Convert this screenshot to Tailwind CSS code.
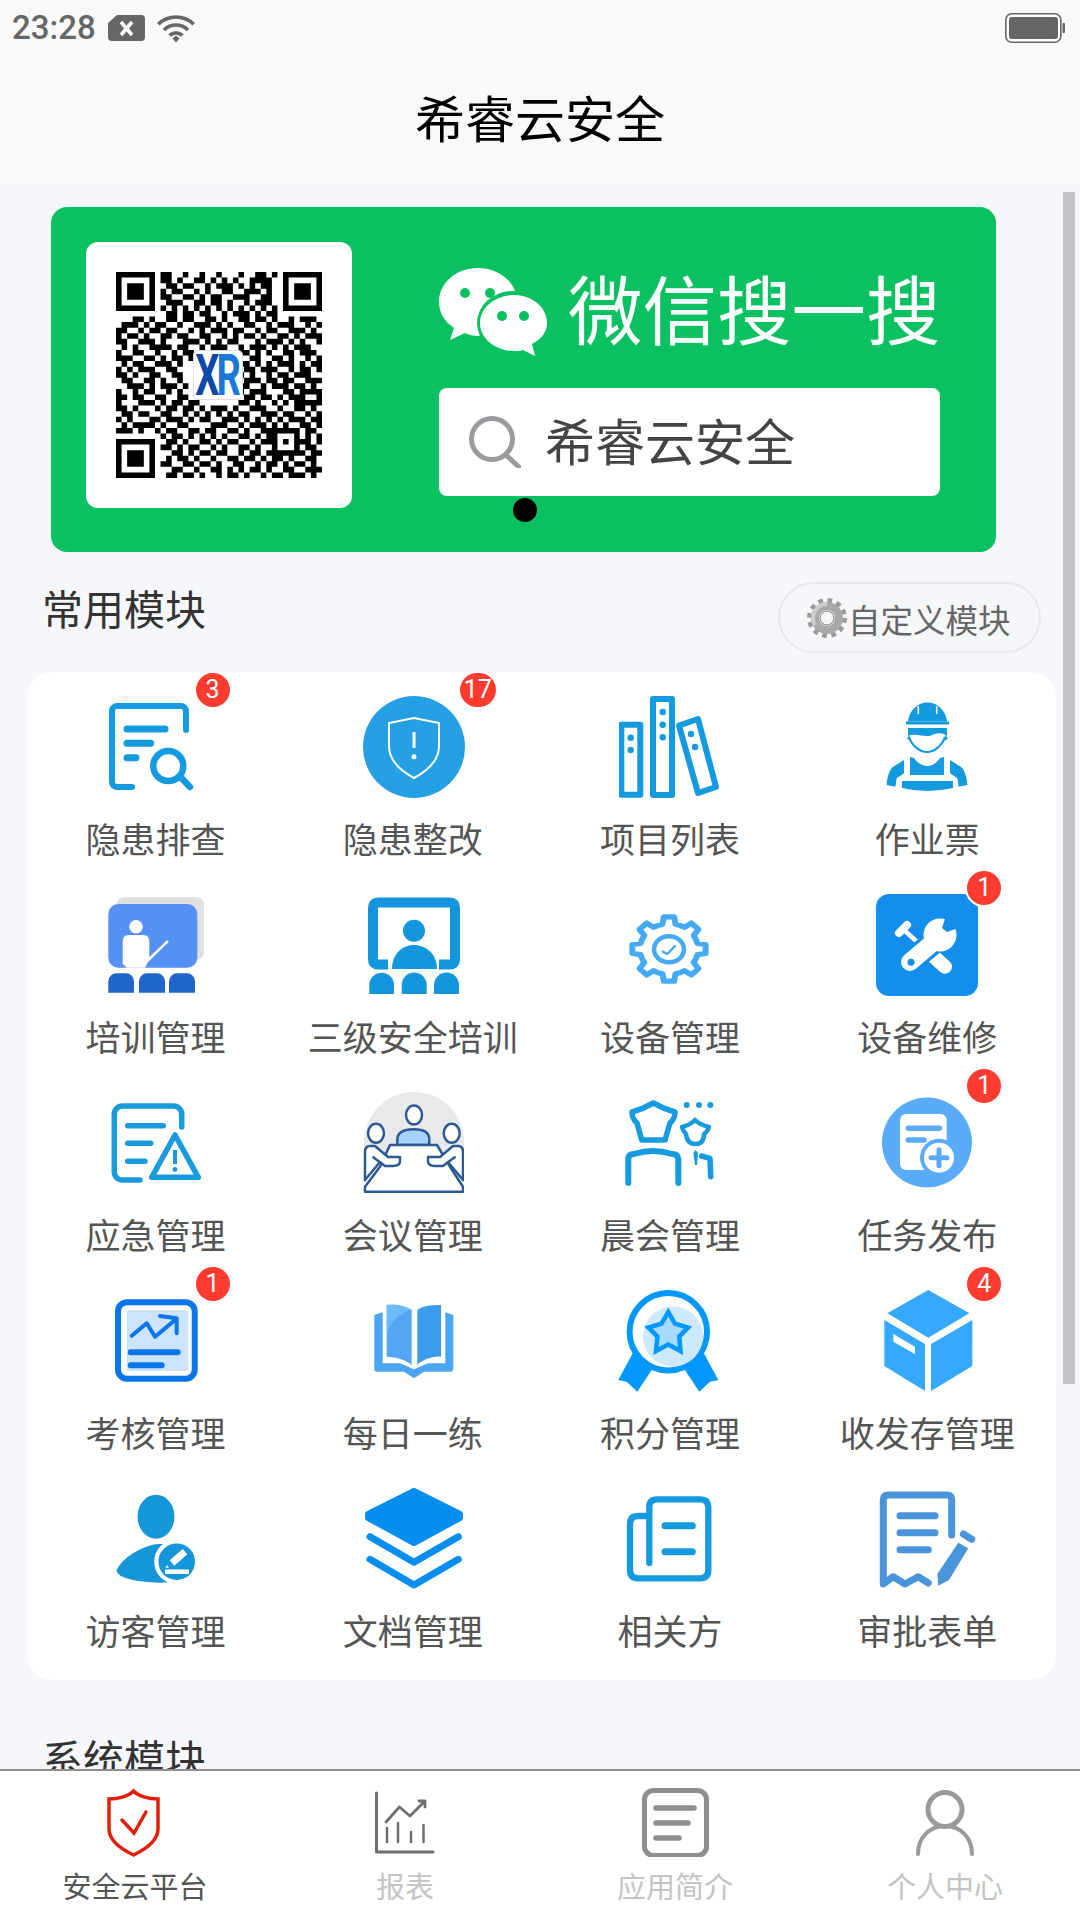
<!DOCTYPE html>
<html lang="zh-CN">
  <head>
    <meta charset="UTF-8" />
    <title>希睿云安全</title>
    <script src="https://cdn.jsdelivr.net/npm/@tailwindcss/browser@4"></script>
  </head>
  <body class="bg-[#f6f7fb]">
    <div class="relative flex flex-col w-[1080px] h-[1920px] overflow-hidden font-['Noto_Sans_CJK_SC',sans-serif]">
      <!-- status bar + title -->
      <header class="h-[187px] flex-none bg-[#f9f9f9]">
        <div class="flex items-center h-[54px] pl-[12px] pr-[15px] pt-[1px]">
          <span class="font-['Roboto',sans-serif] font-medium text-[33px] leading-[54px] text-[#666]">23:28</span>
          <svg class="ml-[12px]" width="37" height="26" viewBox="0 0 37 26">
            <path d="M9 0H33a4 4 0 0 1 4 4V22a4 4 0 0 1-4 4H4a4 4 0 0 1-4-4V8z" fill="#666" />
            <path d="M13 7l11 13M24 7l-11 13" stroke="#fff" stroke-width="3.500" />
          </svg>
          <svg class="ml-[10px]" width="42" height="30" viewBox="0 0 42 30" fill="none" stroke="#666" stroke-width="3.600">
            <path d="M3.300 11.300A25 25 0 0 1 38.700 11.300" />
            <path d="M9 17A17 17 0 0 1 33 17" />
            <path d="M14.600 22.600A9 9 0 0 1 27.400 22.600" />
            <path d="M17.500 25.500L21 22.500L24.500 25.500L21 29.500Z" fill="#666" stroke="none" />
          </svg>
          <svg class="ml-auto" width="60" height="30" viewBox="0 0 60 30">
            <rect x="0.800" y="0.800" width="55" height="28.400" rx="6" fill="#fff" stroke="#666" stroke-width="1.600" />
            <rect x="4" y="4" width="49" height="22" rx="3" fill="#666" />
            <rect x="57.500" y="10" width="2.500" height="10" rx="1" fill="#666" />
          </svg>
        </div>
        <h1 class="mt-[29px] text-center text-[50px] leading-[66px] text-black">希睿云安全</h1>
      </header>

      <main class="flex-1 min-h-0 overflow-hidden pt-[20px]">
        <!-- banner -->
        <section class="relative flex ml-[51px] w-[945px] h-[345px] rounded-[16px] bg-[#09c160] pl-[35px] pt-[35px]">
          <div class="relative flex-none flex items-center justify-center w-[266px] h-[266px] rounded-[12px] bg-white">
            <svg id="qr" width="206" height="206" viewBox="0 0 37 37"><path id="qr-path" fill="#000" /></svg>
            <div class="absolute left-[107px] top-[108px] flex items-center justify-center w-[50px] h-[50px] rounded-[5px] bg-white border border-[#ddd]">
              <span class="flex scale-y-[1.5] font-['Roboto',sans-serif] font-bold text-[38px] leading-none tracking-[-3px] pr-[3px]">
                <span class="text-[#0d47a8]">X</span><span class="text-[#1b78d8]">R</span>
              </span>
            </div>
          </div>
          <div class="w-[501px] ml-[87px] pt-[26px]">
            <div class="flex items-center h-[88px]">
              <svg width="108" height="88" viewBox="0 0 108 88" class="flex-none">
                <path d="M39 0C17 0 0 15 0 34C0 45 6 54 15 60L11 72L26 65C30 67 34 68 39 68C61 68 78 53 78 34C78 15 61 0 39 0Z" fill="#fff" />
                <ellipse cx="74" cy="55" rx="36" ry="32" fill="#09c160" />
                <path d="M75 27C57 27 41 39 41 55C41 71 57 83 75 83C78 83 81 83 84 82L96 88L93 76C103 71 108 63 108 55C108 39 93 27 75 27Z" fill="#fff" />
                <circle cx="26" cy="25" r="5" fill="#09c160" />
                <circle cx="51" cy="25" r="5" fill="#09c160" />
                <circle cx="63" cy="48" r="5" fill="#09c160" />
                <circle cx="85" cy="48" r="5" fill="#09c160" />
              </svg>
              <span class="ml-[21px] -mt-[10px] text-[74.500px] leading-[88px] text-white whitespace-nowrap">微信搜一搜</span>
            </div>
            <div class="flex items-center h-[108px] mt-[32px] rounded-[8px] bg-white pl-[30px]">
              <svg width="52" height="52" viewBox="0 0 52 52" fill="none" stroke="#9a9a9f" stroke-width="5" class="flex-none">
                <circle cx="23" cy="23" r="20.500" />
                <path d="M37 39L50 51" stroke-linecap="round" />
              </svg>
              <span class="ml-[24px] -mt-[6px] text-[50px] text-[#444]">希睿云安全</span>
            </div>
          </div>
          <span class="absolute left-[462px] top-[291px] w-[24px] h-[24px] rounded-full bg-black"></span>
        </section>

        <!-- common modules -->
        <div class="flex justify-between items-start pl-[42px] pr-[39px] pt-[30px]">
          <h2 class="-mt-[3px] text-[41px] leading-[56px] text-[#333]">常用模块</h2>
          <button class="flex items-center w-[263px] h-[71px] rounded-full border-2 border-[#e8e9ed] bg-[#f6f7fa] pl-[27px]">
            <svg width="40" height="40" viewBox="0 0 40 40" fill="none">
              <circle cx="20" cy="20" r="17" stroke="#9a9a9a" stroke-width="6" stroke-dasharray="4.500 4.400" />
              <circle cx="20" cy="20" r="12" stroke="#a9a9a9" stroke-width="8" />
              <path d="M20 6A14 14 0 0 0 8 27" stroke="#cfcfcf" stroke-width="4" />
              <circle cx="20" cy="20" r="7" fill="#f6f7fa" stroke="#777" stroke-width="1" />
            </svg>
            <span class="ml-[1px] mt-[3px] text-[32.500px] text-[#666] whitespace-nowrap">自定义模块</span>
          </button>
        </div>

        <section class="grid grid-cols-4 gap-y-[31px] ml-[27px] mt-[19px] w-[1029px] rounded-[26px] bg-white pt-6 pb-[25px]">
          <!-- row 1 -->
          <div class="flex flex-col items-center">
            <div class="relative w-[102px] h-[102px]">
              <svg width="102" height="102" viewBox="0 0 102 102" fill="none" stroke="#139adf" stroke-linecap="round">
                <path d="M81 34V15a5 5 0 0 0-5-5H12a5 5 0 0 0-5 5V86a5 5 0 0 0 5 5H27" stroke-width="6" />
                <path d="M22 33H60M22 47.300H45.700M22 61.700H31" stroke-width="7" />
                <circle cx="63.300" cy="70" r="15" stroke-width="6.500" />
                <path d="M76.700 82.300L85 91" stroke-width="6.500" />
              </svg>
              <span class="absolute -right-[23px] -top-[23px] flex items-center justify-center w-[34px] h-[34px] rounded-full bg-[#ff3b30] text-white text-[25px] font-['Roboto',sans-serif]">3</span>
            </div>
            <span class="mt-[15px] text-[35px] leading-[50px] text-[#555] whitespace-nowrap">隐患排查</span>
          </div>
          <div class="flex flex-col items-center">
            <div class="relative w-[102px] h-[102px]">
              <svg width="102" height="102" viewBox="0 0 102 102" fill="none" class="overflow-visible">
                <circle cx="52" cy="51" r="51" fill="#26a0e4" />
                <path d="M52 22L77 27V50C77 65 65 75 52 82C39 75 27 65 27 50V27Z" stroke="#fff" stroke-width="2" />
                <path d="M52 36V52" stroke="#fff" stroke-width="3" />
                <circle cx="52" cy="60.700" r="2.500" fill="#fff" />
              </svg>
              <span class="absolute -right-[32px] -top-[23px] flex items-center justify-center w-[36px] h-[34px] rounded-full bg-[#ff3b30] text-white text-[25px] font-['Roboto',sans-serif]">17</span>
            </div>
            <span class="mt-[15px] text-[35px] leading-[50px] text-[#555] whitespace-nowrap">隐患整改</span>
          </div>
          <div class="flex flex-col items-center">
            <div class="relative w-[102px] h-[102px]">
              <svg width="102" height="102" viewBox="0 0 102 102" fill="none" stroke="#139adf" stroke-width="6" stroke-linejoin="round">
                <rect x="2.300" y="28.700" width="19" height="70" />
                <rect x="34" y="3" width="19" height="96" />
                <path d="M60 29.500L79 23L97 91L79 97Z" />
                <g fill="#139adf" stroke="none">
                  <circle cx="11.700" cy="41.700" r="3.200" /><circle cx="11.700" cy="54" r="3.200" />
                  <circle cx="43.700" cy="16" r="3.200" /><circle cx="43.700" cy="28.700" r="3.200" /><circle cx="43.700" cy="41.300" r="3.200" />
                  <circle cx="72" cy="38" r="3.200" /><circle cx="76" cy="51" r="3.200" />
                </g>
              </svg>
            </div>
            <span class="mt-[15px] text-[35px] leading-[50px] text-[#555] whitespace-nowrap">项目列表</span>
          </div>
          <div class="flex flex-col items-center">
            <div class="relative w-[102px] h-[102px]">
              <svg width="102" height="102" viewBox="0 0 102 102" fill="#139adf">
                <path d="M32 25.500C33 14 42 6.500 51.500 6.500C61 6.500 70 14 71 25.500Z" />
                <rect x="30" y="25.500" width="43" height="3" />
                <path d="M42.300 10V18M60.700 10V18" stroke="#fff" stroke-width="1.500" />
                <path d="M32 32H71V40C65 36 60 37 54 40C47 41 40 37 32 40Z" />
                <path d="M33 41C36 50 44 56 51 56C58 56 66 50 69 41" fill="none" stroke="#139adf" stroke-width="2.200" />
                <path d="M31 42L34 39V45ZM72 42L69 39V45Z" />
                <path d="M34 61L38 62C42 68 47 70 51 70C56 70 60 68 64 62L68 61V79H34Z" />
                <path d="M10.700 89C11 80 14 73 17.300 70.700L28 64V77.300L20.700 82.300L19.300 90.700Z" />
                <path d="M91.300 89C91 80 88 73 84.700 70.700L74 64V77.300L81.300 82.300L82.700 90.700Z" />
                <path d="M26 85H77V92Q51 98 26 92Z" />
              </svg>
            </div>
            <span class="mt-[15px] text-[35px] leading-[50px] text-[#555] whitespace-nowrap">作业票</span>
          </div>

          <!-- row 2 -->
          <div class="flex flex-col items-center">
            <div class="relative w-[102px] h-[102px]">
              <svg width="102" height="102" viewBox="0 0 102 102">
                <rect x="11.700" y="3" width="87.300" height="63" rx="8" fill="#e0e0e0" />
                <rect x="3.300" y="10" width="89" height="63.700" rx="10" fill="#5590f5" />
                <circle cx="31" cy="32.700" r="6.800" fill="#fff" />
                <path d="M17.700 47Q17.700 41 24 41H38Q44.300 41 44.300 47V66L40 73.700H22L17.700 70Z" fill="#fff" />
                <path d="M43.300 66L62.300 47.700" stroke="#fff" stroke-width="2.500" stroke-linecap="round" />
                <g fill="#2266cc">
                  <path d="M3.300 98.700V87.300a8 8 0 0 1 8-8H21a8 8 0 0 1 8 8V98.700Z" />
                  <path d="M34 98.700V87.300a8 8 0 0 1 8-8H52a8 8 0 0 1 8 8V98.700Z" />
                  <path d="M64 98.700V87.300a8 8 0 0 1 8-8H82a8 8 0 0 1 8 8V98.700Z" />
                </g>
              </svg>
            </div>
            <span class="mt-[15px] text-[35px] leading-[50px] text-[#555] whitespace-nowrap">培训管理</span>
          </div>
          <div class="flex flex-col items-center">
            <div class="relative w-[102px] h-[102px]">
              <svg width="102" height="102" viewBox="0 0 102 102" fill="#1396de">
                <path d="M26 70.500H16Q11 70.500 11 65.500V13.500Q11 8.500 16 8.500H88Q93 8.500 93 13.500V65.500Q93 70.500 88 70.500H77" fill="none" stroke="#1396de" stroke-width="10" />
                <circle cx="52" cy="36.700" r="11" />
                <path d="M30 75C30 60 40 51 52 51C64 51 75 60 75 75Z" />
                <path d="M7.300 100V91a12.300 12.300 0 0 1 24.700 0V100Z" />
                <path d="M39.700 100V91a12.500 12.500 0 0 1 25 0V100Z" />
                <path d="M72 100V91a12.500 12.500 0 0 1 25 0V100Z" />
              </svg>
            </div>
            <span class="mt-[15px] text-[35px] leading-[50px] text-[#555] whitespace-nowrap">三级安全培训</span>
          </div>
          <div class="flex flex-col items-center">
            <div class="relative w-[102px] h-[102px]">
              <svg width="102" height="102" viewBox="0 0 102 102" fill="none" stroke="#45a9f5" stroke-linejoin="round" stroke-linecap="round">
                <path transform="translate(50 55) scale(1 .88)" stroke-width="6" d="M28.300 -6.500L36.600 -5.100L36.600 5.100L28.300 6.500A29 29 0 0 1 24.600 15.400L29.500 22.300L22.300 29.500L15.400 24.600A29 29 0 0 1 6.500 28.300L5.100 36.600L-5.100 36.600L-6.500 28.300A29 29 0 0 1 -15.400 24.600L-22.300 29.500L-29.500 22.300L-24.600 15.400A29 29 0 0 1 -28.300 6.500L-36.600 5.100L-36.600 -5.100L-28.300 -6.500A29 29 0 0 1 -24.600 -15.400L-29.500 -22.300L-22.300 -29.500L-15.400 -24.600A29 29 0 0 1 -6.500 -28.300L-5.100 -36.600L5.100 -36.600L6.500 -28.300A29 29 0 0 1 15.400 -24.600L22.300 -29.500L29.500 -22.300L24.600 -15.400A29 29 0 0 1 28.300 -6.500Z" />
                <ellipse cx="50" cy="55.300" rx="15" ry="13" stroke-width="4.500" />
                <path d="M43.700 57.700L48.300 60L56 52" stroke-width="2.500" />
              </svg>
            </div>
            <span class="mt-[15px] text-[35px] leading-[50px] text-[#555] whitespace-nowrap">设备管理</span>
          </div>
          <div class="flex flex-col items-center">
            <div class="relative w-[102px] h-[102px]">
              <svg width="102" height="102" viewBox="0 0 102 102" fill="none" stroke-linecap="round">
                <rect width="102" height="102" rx="13" fill="#148eeb" />
                <path d="M54 59.300L69 72.700" stroke="#fff" stroke-width="14" />
                <path d="M27.300 35.300L50 56" stroke="#fff" stroke-width="4.500" />
                <path d="M23 39L31 31" stroke="#fff" stroke-width="8" />
                <path d="M34 68L60 46" stroke="#148eeb" stroke-width="24" />
                <path d="M34 68L60 46" stroke="#fff" stroke-width="18" />
                <circle cx="64" cy="41" r="16.500" fill="#fff" />
                <path d="M71 19L66 34L71 38L85 33L90 22Z" fill="#148eeb" />
                <circle cx="35" cy="68.300" r="3.500" fill="#148eeb" />
              </svg>
              <span class="absolute -right-[25px] -top-[25px] flex items-center justify-center w-[38px] h-[38px] rounded-full border-2 border-white bg-[#ff3b30] text-white text-[25px] font-['Roboto',sans-serif]">1</span>
            </div>
            <span class="mt-[15px] text-[35px] leading-[50px] text-[#555] whitespace-nowrap">设备维修</span>
          </div>

          <!-- row 3 -->
          <div class="flex flex-col items-center">
            <div class="relative w-[102px] h-[102px]">
              <svg width="102" height="102" viewBox="0 0 102 102" fill="none" stroke="#1a9be0" stroke-width="5.500" stroke-linecap="round" stroke-linejoin="round">
                <path d="M76.700 35V22a8 8 0 0 0-8-8H17.300a8 8 0 0 0-8 8V80a8 8 0 0 0 8 8H35" />
                <path d="M22.700 33.700H58.300M22.700 51.300H45.700M22.700 69.300H40" />
                <path d="M70 43L93.300 85.300H46.700Z" />
                <path d="M70 58V72" stroke-width="4" stroke-linecap="butt" />
                <circle cx="70" cy="77.500" r="2.400" fill="#1a9be0" stroke="none" />
              </svg>
            </div>
            <span class="mt-[15px] text-[35px] leading-[50px] text-[#555] whitespace-nowrap">应急管理</span>
          </div>
          <div class="flex flex-col items-center">
            <div class="relative w-[102px] h-[102px]">
              <svg width="102" height="102" viewBox="0 0 102 102" fill="none" stroke="#2c5a94" stroke-width="2.500" stroke-linejoin="round" stroke-linecap="round">
                <path d="M2 50A50 50 0 0 1 102 50V62H2Z" fill="#e8e9eb" stroke="none" />
                <ellipse cx="52" cy="23" rx="8" ry="9.500" fill="#fff" />
                <path d="M35.300 53V47Q36 37.300 52 37.300Q67 37.300 67.300 47V53Z" fill="#a5d3fb" />
                <ellipse cx="14" cy="41.300" rx="8" ry="9.500" fill="#fff" />
                <ellipse cx="89.700" cy="41.300" rx="8" ry="9.500" fill="#fff" />
                <path d="M28 53H75L88 74.700L101 94.700V99.700H3V94.700L18 74.700Z" fill="#fff" />
                <path d="M3 88V60Q3 54 8 54H13L26 65H38V69Q38 74 31 74H23L11.300 65.300" fill="#fff" />
                <path d="M3 88L18 70" />
                <g transform="matrix(-1 0 0 1 104 0)">
                  <path d="M3 88V60Q3 54 8 54H13L26 65H38V69Q38 74 31 74H23L11.300 65.300" fill="#fff" />
                  <path d="M3 88L18 70" />
                </g>
              </svg>
            </div>
            <span class="mt-[15px] text-[35px] leading-[50px] text-[#555] whitespace-nowrap">会议管理</span>
          </div>
          <div class="flex flex-col items-center">
            <div class="relative w-[102px] h-[102px]">
              <svg width="102" height="102" viewBox="0 0 102 102" fill="none" stroke="#169bde" stroke-width="5.500" stroke-linecap="round" stroke-linejoin="round">
                <path d="M13 20Q24 17 34.300 11Q45 17 56 20Q56 27 51 31L46 48H22.700L18 31Q13 27 13 20Z" />
                <path d="M9.300 91V67Q9.300 62 15 62Q34 56 53 62Q59 62 59.300 67V91" stroke-width="6" />
                <path d="M63 35Q71 33 76 28Q81 33 90 35Q89 39 85 42Q85 52 76.500 52Q68 52 67 42Q64 39 63 35Z" stroke-width="4.500" />
                <path d="M82.700 64L91 66.300L91.700 84.700" />
                <path d="M74.300 61L76.700 58L79 61L78 73H76Z" fill="#169bde" stroke="none" />
                <g fill="#169bde" stroke="none"><circle cx="67.700" cy="13" r="3" /><circle cx="80" cy="13" r="3" /><circle cx="91.300" cy="13" r="3" /></g>
              </svg>
            </div>
            <span class="mt-[15px] text-[35px] leading-[50px] text-[#555] whitespace-nowrap">晨会管理</span>
          </div>
          <div class="flex flex-col items-center">
            <div class="relative w-[102px] h-[102px]">
              <svg width="102" height="102" viewBox="0 0 102 102" fill="none" stroke-linecap="round">
                <circle cx="51" cy="50.500" r="45" fill="#5aabfa" />
                <rect x="24" y="22" width="46.700" height="56" rx="6" fill="#fff" />
                <path d="M32.300 36.300H63.300M32.300 48H48" stroke="#5aabfa" stroke-width="5.500" />
                <circle cx="63" cy="65.700" r="19" fill="#5aabfa" />
                <circle cx="63" cy="65.700" r="15" fill="#fff" />
                <path d="M55 65.700H71M63 57.700V73.700" stroke="#5aabfa" stroke-width="5" />
              </svg>
              <span class="absolute -right-[23px] -top-[23px] flex items-center justify-center w-[34px] h-[34px] rounded-full bg-[#ff3b30] text-white text-[25px] font-['Roboto',sans-serif]">1</span>
            </div>
            <span class="mt-[15px] text-[35px] leading-[50px] text-[#555] whitespace-nowrap">任务发布</span>
          </div>

          <!-- row 4 -->
          <div class="flex flex-col items-center">
            <div class="relative w-[102px] h-[102px]">
              <svg width="102" height="102" viewBox="0 0 102 102" fill="none" stroke="#0a76ea" stroke-linecap="round" stroke-linejoin="round">
                <rect x="13" y="12.300" width="76.700" height="76.400" rx="9" stroke-width="6" />
                <rect x="21.700" y="20" width="61.600" height="61" rx="3" fill="#cce4fd" stroke="none" />
                <path d="M26.700 45.700L41.700 33.300L50 46.700L70 30M55 26L71.700 28.300V43.300" stroke-width="4" />
                <path d="M25.700 62.300H72.700M25.700 75.300H56.700" stroke-width="6" />
              </svg>
              <span class="absolute -right-[23px] -top-[23px] flex items-center justify-center w-[34px] h-[34px] rounded-full bg-[#ff3b30] text-white text-[25px] font-['Roboto',sans-serif]">1</span>
            </div>
            <span class="mt-[15px] text-[35px] leading-[50px] text-[#555] whitespace-nowrap">考核管理</span>
          </div>
          <div class="flex flex-col items-center">
            <div class="relative w-[102px] h-[102px]">
              <svg width="102" height="102" viewBox="0 0 102 102">
                <path d="M12.300 25L24 21H80L91.300 25V79Q91.300 81.700 88 81.700H62L52 88.300L42 81.700H15Q12.300 81.700 12.300 79Z" fill="#4aa6f0" />
                <path d="M20.700 20H83.300V73.300H66L52 79.300L38 73.300H20.700Z" fill="#fff" />
                <path d="M24.700 15C35 14 44 16 49.700 20V75C44 70 35 67 24.700 66.700Z" fill="#52a6f3" />
                <path d="M55.300 20C60 16 68 15 79 15V66.700C70 66 60 70 55.300 75Z" fill="#3b9cee" />
                <path d="M24.700 15C35 14 44 16 49.700 20C40 22 30 30 24.700 43Z" fill="#6cbcfb" />
              </svg>
            </div>
            <span class="mt-[15px] text-[35px] leading-[50px] text-[#555] whitespace-nowrap">每日一练</span>
          </div>
          <div class="flex flex-col items-center">
            <div class="relative w-[102px] h-[102px]">
              <svg width="102" height="102" viewBox="0 0 102 102" fill="none" class="overflow-visible">
                <path d="M13.700 63.300L-0.700 90L7.700 91.700L18.300 101.700L32.700 80Z" fill="#0098ff" />
                <path d="M84.900 63.300L99.300 90L90.900 91.700L80.300 101.700L65.900 80Z" fill="#0098ff" />
                <circle cx="49.300" cy="41.700" r="38.700" fill="#fff" stroke="#0098ff" stroke-width="6" />
                <circle cx="54" cy="46.500" r="30" fill="#cce9fe" />
                <path d="M49.300 22L56 33.700L69 37.500L60.200 46.600L61.500 61L49.300 54.500L37 61L38.400 46.600L29.500 37.500L42.500 33.700Z" fill="#a8dafd" stroke="#0098ff" stroke-width="4.500" />
              </svg>
            </div>
            <span class="mt-[15px] text-[35px] leading-[50px] text-[#555] whitespace-nowrap">积分管理</span>
          </div>
          <div class="flex flex-col items-center">
            <div class="relative w-[102px] h-[102px]">
              <svg width="102" height="102" viewBox="0 0 102 102" fill="#35a9ff">
                <path d="M52.300 0L93.300 23.300L52.300 47.700L11.300 23.300Z" />
                <path d="M8.300 30L49 54V101L8.300 76Z" />
                <path d="M96.300 30L55 54V101L96.300 76Z" />
                <path d="M17.300 44L39 56.700V64L17.300 51.700Z" fill="#fff" />
              </svg>
              <span class="absolute -right-[23px] -top-[23px] flex items-center justify-center w-[34px] h-[34px] rounded-full bg-[#ff3b30] text-white text-[25px] font-['Roboto',sans-serif]">4</span>
            </div>
            <span class="mt-[15px] text-[35px] leading-[50px] text-[#555] whitespace-nowrap">收发存管理</span>
          </div>

          <!-- row 5 -->
          <div class="flex flex-col items-center">
            <div class="relative w-[102px] h-[102px]">
              <svg width="102" height="102" viewBox="0 0 102 102" fill="#1496d9">
                <ellipse cx="51" cy="28.700" rx="18.500" ry="22" />
                <path d="M53.300 56C40 57 18 68 11.700 82C11.700 90 30 94 55 94.700L70 94V56Z" />
                <circle cx="71.700" cy="73.700" r="22.500" fill="#fff" />
                <circle cx="71.700" cy="73.700" r="18.300" />
                <path d="M80 63.700L67 75" stroke="#fff" stroke-width="7" />
                <path d="M62 77L64 79.500L60.500 80Z" fill="#fff" />
                <path d="M60 83.700H84" stroke="#fff" stroke-width="4.500" />
              </svg>
            </div>
            <span class="mt-[15px] text-[35px] leading-[50px] text-[#555] whitespace-nowrap">访客管理</span>
          </div>
          <div class="flex flex-col items-center">
            <div class="relative w-[102px] h-[102px]">
              <svg width="102" height="102" viewBox="0 0 102 102" fill="none" stroke="#048ef0" stroke-linecap="round" stroke-linejoin="round">
                <path d="M52 3L98 26V30L52 55L6 30V26Z" fill="#048ef0" stroke-width="6" />
                <path d="M8 48.700L52 74.300L96.300 48.700" stroke-width="7" />
                <path d="M8 71.300L52 97L96.300 71.300" stroke-width="7" />
              </svg>
            </div>
            <span class="mt-[15px] text-[35px] leading-[50px] text-[#555] whitespace-nowrap">文档管理</span>
          </div>
          <div class="flex flex-col items-center">
            <div class="relative w-[102px] h-[102px]">
              <svg width="102" height="102" viewBox="0 0 102 102" fill="none" stroke="#169adf" stroke-width="6.300" stroke-linecap="round">
                <path d="M30.300 75V19Q30.300 11.300 38 11.300H81Q89.300 11.300 89.300 19.500V82Q89.300 90.300 81 90.300H19Q11 90.300 11 82V36Q11 28 19 28H30" />
                <path d="M46 37.700H73.300M46 63.700H73.300" stroke-width="7" />
              </svg>
            </div>
            <span class="mt-[15px] text-[35px] leading-[50px] text-[#555] whitespace-nowrap">相关方</span>
          </div>
          <div class="flex flex-col items-center">
            <div class="relative w-[102px] h-[102px]">
              <svg width="102" height="102" viewBox="0 0 102 102" fill="none" stroke="#4a94dc" stroke-width="7" stroke-linecap="round" stroke-linejoin="round" class="overflow-visible">
                <path d="M75.700 47V12Q75.700 7 71 7H12.500Q7.300 7 7.300 12V96L17.300 88.700L29 96L42.300 88.700L52.300 95" />
                <path d="M24 27.700H59M24 44.700H59M24 61.700H52.300" />
                <path d="M87.300 46L95.700 51.300" />
                <path d="M82.300 54.700L92.300 60.300L73 92L62.300 97.700L61.300 86Z" fill="#4a94dc" stroke="none" />
              </svg>
            </div>
            <span class="mt-[15px] text-[35px] leading-[50px] text-[#555] whitespace-nowrap">审批表单</span>
          </div>
        </section>

        <h2 class="ml-[42px] mt-[49px] text-[41px] leading-[56px] text-[#333]">系统模块</h2>
      </main>

      <!-- bottom tabs -->
      <nav class="grid grid-cols-4 flex-none h-[151px] border-t-2 border-[#8d8d92] bg-white pt-[16px]">
        <a class="flex flex-col items-center">
          <svg width="70" height="70" viewBox="0 0 70 70" fill="none" stroke="#e0200c" stroke-width="3.500" stroke-linecap="round">
            <path d="M33.500 4C38 9 48 12 58 12V42C58 54 46 62 33.500 68C21 62 9 54 9 42V12C19 12 29 9 33.500 4Z" />
            <path d="M22 33L34 46L46 25" />
          </svg>
          <span class="mt-[8px] text-[29px] leading-[40px] text-[#555]">安全云平台</span>
        </a>
        <a class="flex flex-col items-center">
          <svg width="70" height="70" viewBox="0 0 70 70" fill="none" stroke="#6f6f6f" stroke-linecap="round" stroke-linejoin="round">
            <path d="M6.500 6V65H63" stroke-width="3" />
            <path d="M16 35L29.400 20L40 29L55 14M49 14H55V20" stroke-width="2.800" />
            <path d="M17 41V55M28 36V55M41 45V55M53.500 38V55" stroke-width="2.500" />
          </svg>
          <span class="mt-[8px] text-[29px] leading-[40px] text-[#c4c4c4]">报表</span>
        </a>
        <a class="flex flex-col items-center">
          <svg width="70" height="70" viewBox="0 0 70 70" fill="none" stroke="#8e8e8e" stroke-linecap="round">
            <rect x="4.500" y="3.500" width="62" height="65" rx="9" stroke-width="5" />
            <path d="M16 21H54M16 36H48M16 51H39" stroke-width="5.500" />
          </svg>
          <span class="mt-[8px] text-[29px] leading-[40px] text-[#c4c4c4]">应用简介</span>
        </a>
        <a class="flex flex-col items-center">
          <svg width="70" height="70" viewBox="0 0 70 70" fill="none" stroke="#9a9a9a" stroke-linecap="round">
            <ellipse cx="35" cy="22.500" rx="17" ry="17" stroke-width="5" />
            <path d="M8 67C8 50 20 39 35 39C50 39 62 50 62 67" stroke-width="4" />
          </svg>
          <span class="mt-[8px] text-[29px] leading-[40px] text-[#c4c4c4]">个人中心</span>
        </a>
      </nav>

      <!-- scrollbar thumb over content -->
      <div class="absolute left-[1063px] top-[192px] w-[12px] h-[1192px] bg-[#c4c4c4]"></div>
    </div>

    <script>
      const qrRows = [
        "1111111"+"01100100100100010011010"+"1111111",
        "1000001"+"01101001101010100111100"+"1000001",
        "1011101"+"00110110010111010101100"+"1011101",
        "1011101"+"01011001010011001110100"+"1011101",
        "1011101"+"01100110101100111001100"+"1011101",
        "1000001"+"00111001101101001011100"+"1000001",
        "1111111"+"01010101010101010101010"+"1111111",
        "0000000001101101100101110101100000000",
        "0001101001101100110100110110100101110",
        "0111010110010011101010011001011100101",
        "1100101101100101011101100101100111010",
        "1011010011011001100101011010011010111",
        "1100111010001110101011000101110101001",
        "0101001111011001011100101110101011100",
        "1001100100101100010001110101001101110",
        "1110011010110100000000001100110100101",
        "0101100111010000000000110101011101011",
        "1010111001100000000000011011100101101",
        "1101001100110000000000101001011011100",
        "0110011010010000000000011101101100111",
        "0011101011101000000000110010111011010",
        "1001011001010000000000101110001101111",
        "1101100110011000000000011011010111001",
        "1000111010110110000000110100101011111",
        "1101000101101101011101001110010011010",
        "0110110011001010101010110011101100101",
        "1010001101110101100111010101010111011",
        "0101111010011000011100101110101001101",
        "1110100101100110110011010011"+"11111"+"0110",
        "0000000010110101010100110101"+"10001"+"0101",
        "11111110"+"01101001101011001011"+"10101"+"1101",
        "10000010"+"11010110010100110100"+"10001"+"0110",
        "10111010"+"00110101101100101101"+"11111"+"1011",
        "10111010"+"01011010010011011010110100110",
        "10111010"+"11001101101001100101101011010",
        "10000010"+"00110010011010101101001100111",
        "11111110"+"01101101001011010010110111010",
      ];

      let qrPath = "";
      qrRows.forEach((row, y) => {
        [...row].forEach((cell, x) => {
          if (cell === "1") qrPath += `M${x} ${y}h1v1h-1z`;
        });
      });
      document.getElementById("qr-path").setAttribute("d", qrPath);
    </script>
  </body>
</html>
